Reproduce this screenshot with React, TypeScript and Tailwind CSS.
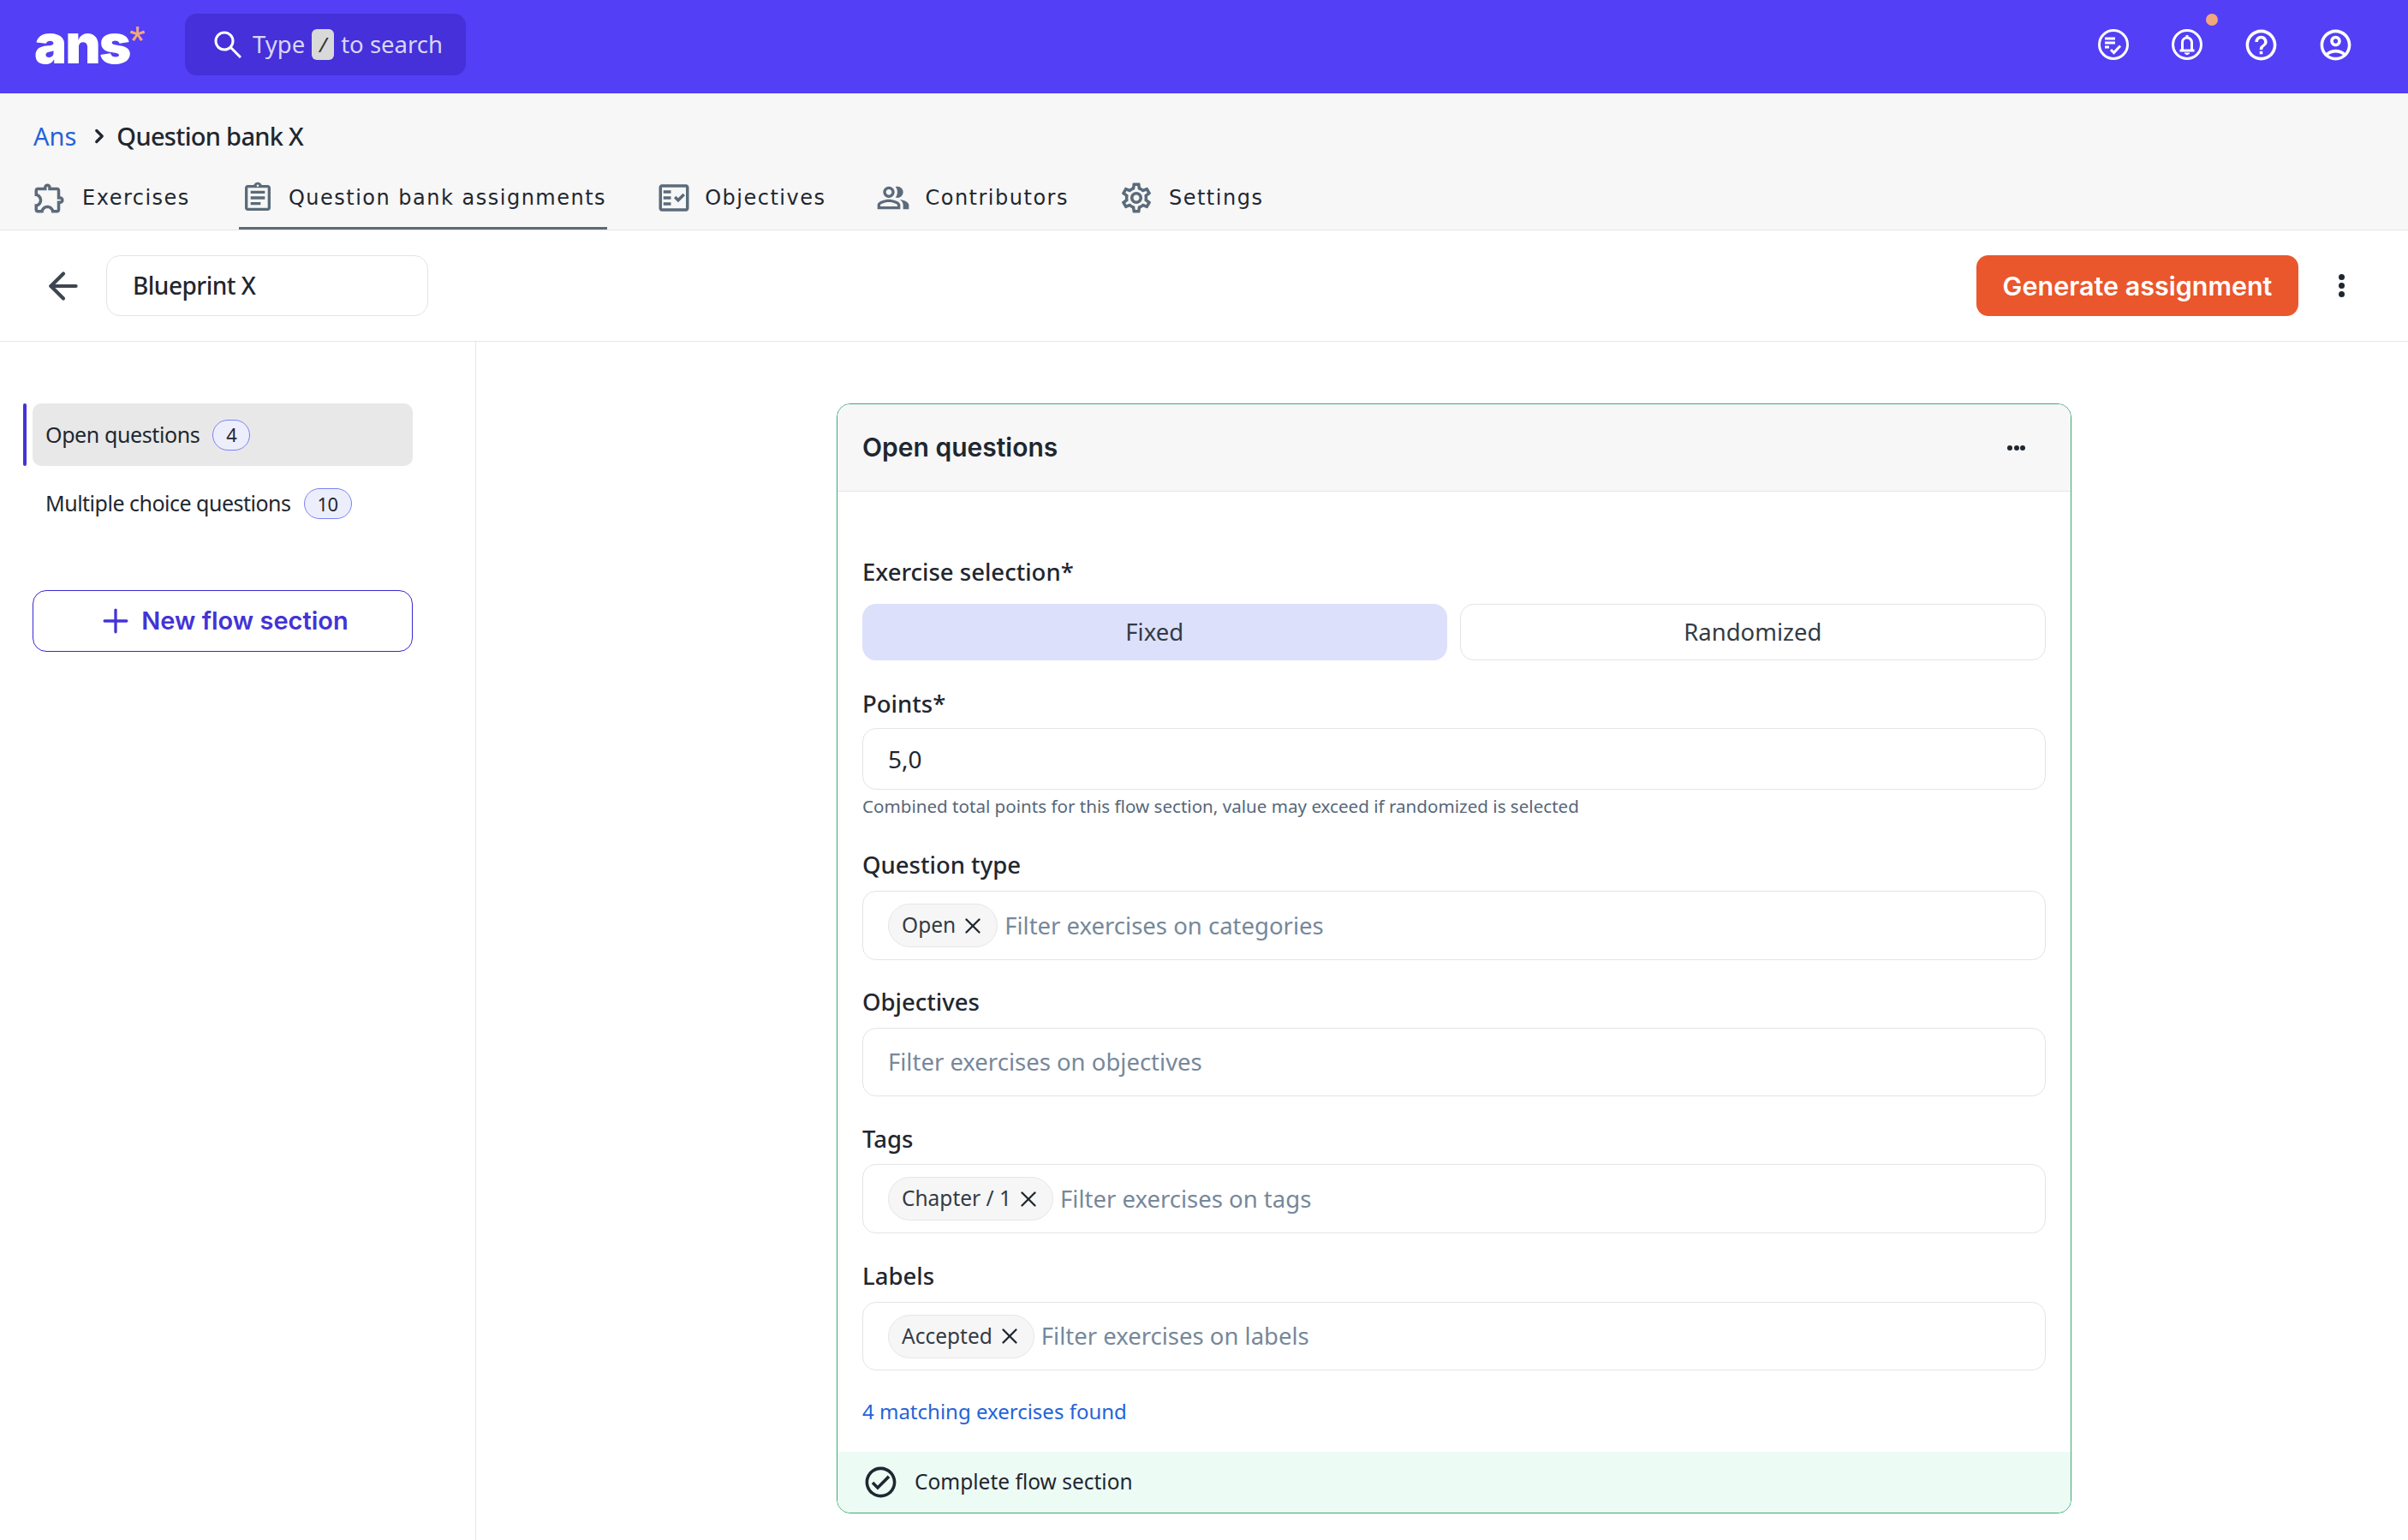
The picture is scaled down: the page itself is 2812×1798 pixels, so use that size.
import { ChevronRight, ArrowLeft, Plus, X } from "lucide-react";
import {
  MdOutlineExtension,
  MdOutlineAssignment,
  MdOutlineFactCheck,
  MdOutlinePeopleAlt,
  MdOutlineSettings,
  MdOutlineHelpOutline,
  MdOutlineAccountCircle,
  MdOutlineCheckCircle,
} from "react-icons/md";

const tabs = [
  { name: "Exercises", gap: "gap-[20px]", icon: <MdOutlineExtension size={42} className="shrink-0" /> },
  { name: "Question bank assignments", gap: "gap-[18px]", active: true, icon: <MdOutlineAssignment size={40} className="shrink-0" /> },
  { name: "Objectives", gap: "gap-[18px]", icon: <MdOutlineFactCheck size={42} className="shrink-0" /> },
  { name: "Contributors", gap: "gap-[19px]", icon: <MdOutlinePeopleAlt size={40} className="shrink-0" /> },
  { name: "Settings", gap: "gap-[20px]", icon: <MdOutlineSettings size={42} className="shrink-0" /> },
];

function TasksIcon() {
  return (
    <svg width="36" height="36" viewBox="0 0 36 36" fill="none" stroke="white" strokeWidth="3">
      <circle cx="18" cy="18" r="16.500" />
      <path d="M8 11h12M8 16h12M8 21h5" />
      <path d="M15 24l3.500 3.500 7.500-8" />
    </svg>
  );
}

function BellIcon() {
  return (
    <svg width="36" height="36" viewBox="0 0 36 36" fill="none" stroke="white" strokeWidth="3">
      <circle cx="18" cy="18" r="16.500" />
      <path d="M9.500 25h17M12.500 25V15.500a5.500 5.500 0 0 1 11 0V25" />
      <path d="M18 7v3" />
      <path d="M15 28h6l-3 2z" fill="white" strokeWidth="1" />
    </svg>
  );
}

function SearchIcon() {
  return (
    <svg width="32" height="32" viewBox="0 0 32 32" fill="none" stroke="white" strokeWidth="3" className="shrink-0">
      <circle cx="12" cy="12" r="10" />
      <path d="M19.500 19.500L31 31" />
    </svg>
  );
}

function Dots({ vertical }: { vertical?: boolean }) {
  return (
    <div className={vertical ? "flex flex-col gap-[3px]" : "flex gap-[1.500px]"}>
      <span className={vertical ? "w-[7px] h-[7px] rounded-full bg-[#1f2730]" : "w-[6px] h-[6px] rounded-full bg-[#1f2730]"} />
      <span className={vertical ? "w-[7px] h-[7px] rounded-full bg-[#1f2730]" : "w-[6px] h-[6px] rounded-full bg-[#1f2730]"} />
      <span className={vertical ? "w-[7px] h-[7px] rounded-full bg-[#1f2730]" : "w-[6px] h-[6px] rounded-full bg-[#1f2730]"} />
    </div>
  );
}

function Chip({ text }: { text: string }) {
  return (
    <span className="flex items-center gap-[11px] h-[51px] pl-[15px] pr-[19px] rounded-full bg-[#f6f6f6] border border-[#e6e6e6] text-[24.500px] text-[#333b44]">
      {text}
      <X size={30} strokeWidth={1.900} className="text-[#1f2730] -mx-[6px]" />
    </span>
  );
}

function FilterField({ label, placeholder, chip, labelClass, boxClass }: { label: string; placeholder: string; chip?: string; labelClass: string; boxClass: string }) {
  return (
    <>
      <label className={`block h-[40px] leading-[40px] text-[27.500px] font-medium text-[#1f2730] ${labelClass}`}>{label}</label>
      <div className={`flex items-center gap-[8px] pl-[29px] rounded-[16px] border border-[#e4e4e4] ${boxClass}`}>
        {chip && <Chip text={chip} />}
        <span className="text-[27.500px] text-[#76889a]">{placeholder}</span>
      </div>
    </>
  );
}

export default function App() {
  return (
    <div className="w-[2812px] h-[1798px] overflow-hidden bg-white font-['Noto_Sans',sans-serif] text-[#1f2730]">
      <header className="h-[109px] bg-[#533ff5] flex items-center pl-[40px] pr-[67px] pb-[5px]">
        <div className="relative w-[176px] h-[60px] flex items-center">
          <span className="font-['Inter',sans-serif] font-black text-[64px] leading-none text-white tracking-[-2px] -mt-[2px]">ans</span>
          <span className="absolute left-[111px] top-[2px] text-[48px] leading-none text-[#f2a77c] font-['Liberation_Sans',sans-serif]">*</span>
        </div>
        <div className="flex items-center w-[328px] h-[72px] rounded-[14px] bg-[#4530d9] pl-[34px] text-[#d9d6f6] text-[27.500px]">
          <SearchIcon />
          <span className="ml-[13px]">Type</span>
          <span className="mx-[8px] w-[26px] h-[36px] rounded-[6px] bg-[#d9d9d9] text-[#333] text-[24px] leading-[36px] text-center italic">/</span>
          <span>to search</span>
        </div>
        <div className="ml-auto flex items-center gap-[50.500px]">
          <TasksIcon />
          <div className="relative">
            <BellIcon />
            <span className="absolute -right-[18px] -top-[18px] w-[14px] h-[14px] rounded-full bg-[#f2a77c]" />
          </div>
          <MdOutlineHelpOutline size={43} color="white" className="-m-[3.500px]" />
          <MdOutlineAccountCircle size={43} color="white" className="-m-[3.500px]" />
        </div>
      </header>

      <div className="h-[160px] bg-[#f7f7f7] border-b border-[#e6e6e6] pl-[36px]">
        <div className="flex items-center h-[40px] mt-0 ml-[3px] pt-[30px] box-content text-[29px]">
          <span className="text-[#2563d8]">Ans</span>
          <ChevronRight size={26} strokeWidth={3} className="ml-[14px] mr-[7px]" />
          <span className="font-medium tracking-[-0.700px]">Question bank X</span>
        </div>
        <nav className="mt-[15px] h-[74px] flex gap-[56px] font-['DejaVu_Sans',sans-serif] text-[24px] tracking-[1.500px]">
          {tabs.map((t) => (
            <div key={t.name} className={t.active ? `flex items-center ${t.gap} pl-[4px] pr-[1px] border-y-[3px] border-t-transparent border-b-[#5b6b7a]` : `flex items-center ${t.gap} pl-[4px] pr-[1px] border-y-[3px] border-transparent`}>
              <span className="flex w-[36px] h-[36px] items-center justify-center text-[#5b6b7a]">{t.icon}</span>
              <span>{t.name}</span>
            </div>
          ))}
        </nav>
      </div>

      <div className="h-[130px] border-b border-[#e6e6e6] flex items-center pl-[49px] pr-[74px]">
        <ArrowLeft size={50} strokeWidth={2} className="text-[#3d4650]" />
        <div className="ml-[25px] w-[376px] h-[71px] rounded-[16px] border border-[#e4e4e4] pl-[30px] pb-[2px] flex items-center text-[28px] font-medium tracking-[-0.500px]">Blueprint X</div>
        <button className="ml-auto w-[376px] h-[71px] rounded-[14px] bg-[#ea572d] text-white text-[30.500px] font-semibold font-['Inter',sans-serif]">Generate assignment</button>
        <div className="ml-[47px]"><Dots vertical /></div>
      </div>

      <div className="flex h-[1400px]">
        <aside className="w-[556px] shrink-0 border-r border-[#e6e6e6] pt-[72px] pl-[27px]">
          <div className="flex h-[73px]">
            <span className="w-[4px] rounded-full bg-[#4433d6]" />
            <div className="ml-[7px] w-[444px] rounded-[10px] bg-[#e8e8e8] flex items-center pl-[15px] text-[25px] tracking-[-0.400px]">
              Open questions
              <span className="ml-[15px] w-[44px] h-[36px] rounded-full bg-[#eceefc] border border-[#7c82f0] flex items-center justify-center text-[22px]">4</span>
            </div>
          </div>
          <div className="ml-[26px] mt-[26px] h-[36px] flex items-center text-[25px] tracking-[-0.500px]">
            Multiple choice questions
            <span className="ml-[15px] w-[56px] h-[36px] rounded-full bg-[#eceefc] border border-[#7c82f0] flex items-center justify-center text-[22px]">10</span>
          </div>
          <button className="ml-[11px] mt-[83px] w-[444px] h-[72px] rounded-[16px] border border-[#3a28d0] flex items-center justify-center gap-[8px] text-[#4433d6] text-[29px] font-semibold font-['Inter',sans-serif]">
            <Plus size={44} strokeWidth={1.800} />
            New flow section
          </button>
        </aside>

        <main className="pl-[421px] pt-[72px]">
          <div className="w-[1442px] rounded-[16px] border border-[#3da874] overflow-hidden">
            <div className="h-[102px] bg-[#f7f7f7] border-b border-[#e6e6e6] flex items-center justify-between pl-[29px] pr-[53px]">
              <h2 className="text-[30px] font-semibold font-['Inter',sans-serif]">Open questions</h2>
              <Dots />
            </div>

            <div className="px-[29px] pt-[74px]">
              <label className="block h-[40px] leading-[40px] text-[27.500px] font-medium">Exercise selection*</label>
              <div className="mt-[17px] flex gap-[15px]">
                <div className="flex-1 h-[66px] rounded-[16px] bg-[#dde0fb] flex items-center justify-center text-[27.500px] text-[#333b44]">Fixed</div>
                <div className="flex-1 h-[66px] rounded-[16px] border border-[#e4e4e4] flex items-center justify-center text-[27.500px] text-[#333b44]">Randomized</div>
              </div>

              <label className="block mt-[31px] h-[40px] leading-[40px] text-[27.500px] font-medium">Points*</label>
              <div className="mt-[8px] h-[72px] rounded-[16px] border border-[#e4e4e4] pl-[29px] flex items-center text-[28px]">5,0</div>
              <p className="mt-[7px] h-[24px] leading-[24px] text-[20.600px] text-[#56677a]">Combined total points for this flow section, value may exceed if randomized is selected</p>

              <FilterField label="Question type" chip="Open" placeholder="Filter exercises on categories" labelClass="mt-[37px]" boxClass="mt-[10px] h-[81px]" />
              <FilterField label="Objectives" placeholder="Filter exercises on objectives" labelClass="mt-[29px]" boxClass="mt-[10px] h-[80px]" />
              <FilterField label="Tags" chip="Chapter / 1" placeholder="Filter exercises on tags" labelClass="mt-[30px]" boxClass="mt-[9px] h-[81px]" />
              <FilterField label="Labels" chip="Accepted" placeholder="Filter exercises on labels" labelClass="mt-[30px]" boxClass="mt-[10px] h-[80px]" />

              <p className="mt-[32px] h-[32px] leading-[32px] text-[24px] text-[#2563d8]">4 matching exercises found</p>
            </div>

            <div className="mt-[31px] h-[71px] bg-[#edfbf5] flex items-center gap-[22px] pl-[32px] text-[24.500px]">
              <MdOutlineCheckCircle size={43} className="-m-[3.500px] shrink-0" />
              Complete flow section
            </div>
          </div>
        </main>
      </div>
    </div>
  );
}
